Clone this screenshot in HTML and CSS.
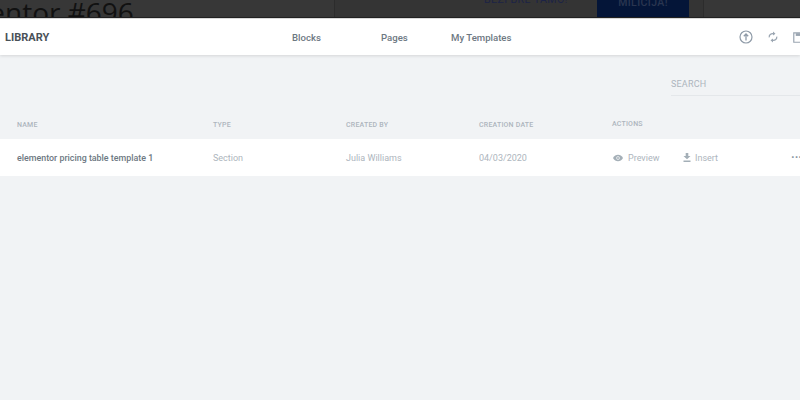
FILE: index.html
```html
<!DOCTYPE html>
<html lang="en">
<head>
<meta charset="utf-8">
<title>Library</title>
<link rel="stylesheet" href="styles.css">
</head>
<body>
<div class="backdrop">
  <div class="page-title">Elementor #696</div>
  <div class="page-card">
    <span class="bezi">BEŽI BRE TAMO!</span>
    <span class="milicija">MILICIJA!</span>
  </div>
</div>
<header class="topbar">
  <div class="logo">LIBRARY</div>
  <nav class="tabs">
    <span class="tab tab-blocks">Blocks</span>
    <span class="tab tab-pages">Pages</span>
    <span class="tab">My Templates</span>
  </nav>
  <div class="tools">
    <svg class="tool" width="14" height="14" viewBox="0 0 14 14"><circle cx="7" cy="7" r="6" fill="none" stroke="#8f9ba8" stroke-width="1.2"/><path d="M7 10.600V4.200M4.800 6.200L7 4l2.200 2.200" fill="none" stroke="#8f9ba8" stroke-width="1.300"/></svg>
    <svg class="tool" width="10" height="12" viewBox="0 0 12 14"><path d="M1.500 7.500C1 4.500 3.500 2.600 6.500 3M10.500 6.500c.5 3-2 4.900-5 4.500" fill="none" stroke="#9aa5b1" stroke-width="1.500"/><path d="M6 .5l3 2.500-3 2.200zM6 13.500l-3-2.500 3-2.200z" fill="#9aa5b1"/></svg>
    <svg class="tool" width="11" height="11" viewBox="0 0 14 14"><path d="M1 1h9.500L13 3.500V13H1z" fill="none" stroke="#9aa5b1" stroke-width="1.500"/><path d="M3.500 1.500h6v3.500h-6z" fill="#9aa5b1"/></svg>
  </div>
</header>
<main class="content">
  <div class="search-row"><div class="search">SEARCH</div></div>
  <div class="grid heads">
    <span>NAME</span><span>TYPE</span><span>CREATED BY</span><span>CREATION DATE</span><span class="head-actions">ACTIONS</span>
  </div>
  <div class="grid row">
    <span class="name">elementor pricing table template 1</span>
    <span>Section</span>
    <span>Julia Williams</span>
    <span>04/03/2020</span>
    <div class="actions">
      <span class="action action-preview">
        <svg width="10" height="8" viewBox="0 0 10 8"><path d="M0 4c1.300-2.200 3-3.300 5-3.300S8.700 1.800 10 4C8.700 6.200 7 7.300 5 7.300S1.300 6.200 0 4z" fill="#a4afb7"/><circle cx="5" cy="4" r="1.700" fill="#fff"/><circle cx="5" cy="4" r="1" fill="#a4afb7"/></svg>
        Preview
      </span>
      <span class="action action-insert">
        <svg width="8" height="9" viewBox="0 0 8 9"><path d="M2.700 0h2.600v3H7.500L4 6.300.5 3h2.200zM.5 7.600h7V9h-7z" fill="#a4afb7"/></svg>
        Insert
      </span>
      <span class="more">···</span>
    </div>
  </div>
</main>
</body>
</html>
```
FILE: styles.css
```css
* { box-sizing: border-box; }
html, body { margin: 0; height: 100%; }
body {
  width: 800px;
  height: 400px;
  overflow: hidden;
  background: #f1f3f5;
  font-family: Roboto, "Liberation Sans", sans-serif;
  color: #adb5bd;
}
.backdrop {
  height: 18px;
  background: #373737;
  border-bottom: 1px solid #222;
  display: flex;
  overflow: hidden;
}
.page-title {
  flex: none;
  width: 409px;
  height: 23px;
  margin-left: -75px;
  margin-top: -5px;
  font-family: "Open Sans", sans-serif;
  font-size: 28px;
  line-height: 34px;
  color: #111;
  white-space: nowrap;
}
.page-card {
  flex: none;
  width: 370px;
  background: #343434;
  display: flex;
  padding-left: 149px;
  border-left: 1px solid #2c2c2c;
  border-right: 1px solid #2c2c2c;
}
.bezi {
  width: 113px;
  margin-top: -7px;
  font-size: 10.6px;
  line-height: 14px;
  letter-spacing: .4px;
  color: #1c2346;
  white-space: nowrap;
}
.milicija {
  width: 92px;
  background: #041538;
  color: #2a3550;
  text-align: center;
  font-size: 10.5px;
  font-weight: 500;
  line-height: 6px;
  letter-spacing: .4px;
}
.topbar {
  height: 37px;
  background: #fff;
  box-shadow: 0 1px 3px rgba(0, 0, 0, .12);
  border-top: 1px solid #d9d9d9;
  display: flex;
  align-items: center;
  position: relative;
  overflow: hidden;
}
.logo {
  flex: none;
  width: 292px;
  padding-left: 5px;
  font-size: 11px;
  font-weight: 700;
  color: #495157;
}
.tabs {
  flex: none;
  width: 447px;
  display: flex;
  font-size: 9.6px;
  font-weight: 500;
  color: #6d7882;
}
.tab-blocks { width: 89px; }
.tab-pages { width: 70px; }
.tools {
  display: flex;
  align-items: center;
  flex: none;
  gap: 15px;
}
.tool { flex: none; }
.content { display: block; }
.search-row {
  display: flex;
  justify-content: flex-end;
  height: 42px;
  padding-top: 21px;
}
.search {
  width: 129px;
  height: 20px;
  padding-top: 3px;
  font-size: 9px;
  line-height: 11px;
  letter-spacing: .2px;
  border-bottom: 1px solid #e4e7ea;
}
.grid {
  display: grid;
  grid-template-columns: 196px 133px 133px 133px 1fr;
  padding-left: 17px;
  align-items: center;
}
.heads {
  height: 42px;
  padding-top: 14px;
  font-size: 7px;
  font-weight: 500;
  letter-spacing: .2px;
}
.head-actions { margin-top: -2px; }
.row {
  height: 37px;
  background: #fff;
  font-size: 9px;
}
.name {
  font-size: 8.9px;
  font-weight: 500;
  color: #6d7882;
}
.actions {
  display: flex;
  align-items: center;
}
.action {
  display: flex;
  align-items: center;
  gap: 5px;
}
.action-preview { width: 71px; padding-left: 1px; }
.action-insert { gap: 4px; }
.more {
  margin-left: 73px;
  font-size: 12px;
  font-weight: 700;
  color: #8a96a3;
  line-height: 10px;
}
```
